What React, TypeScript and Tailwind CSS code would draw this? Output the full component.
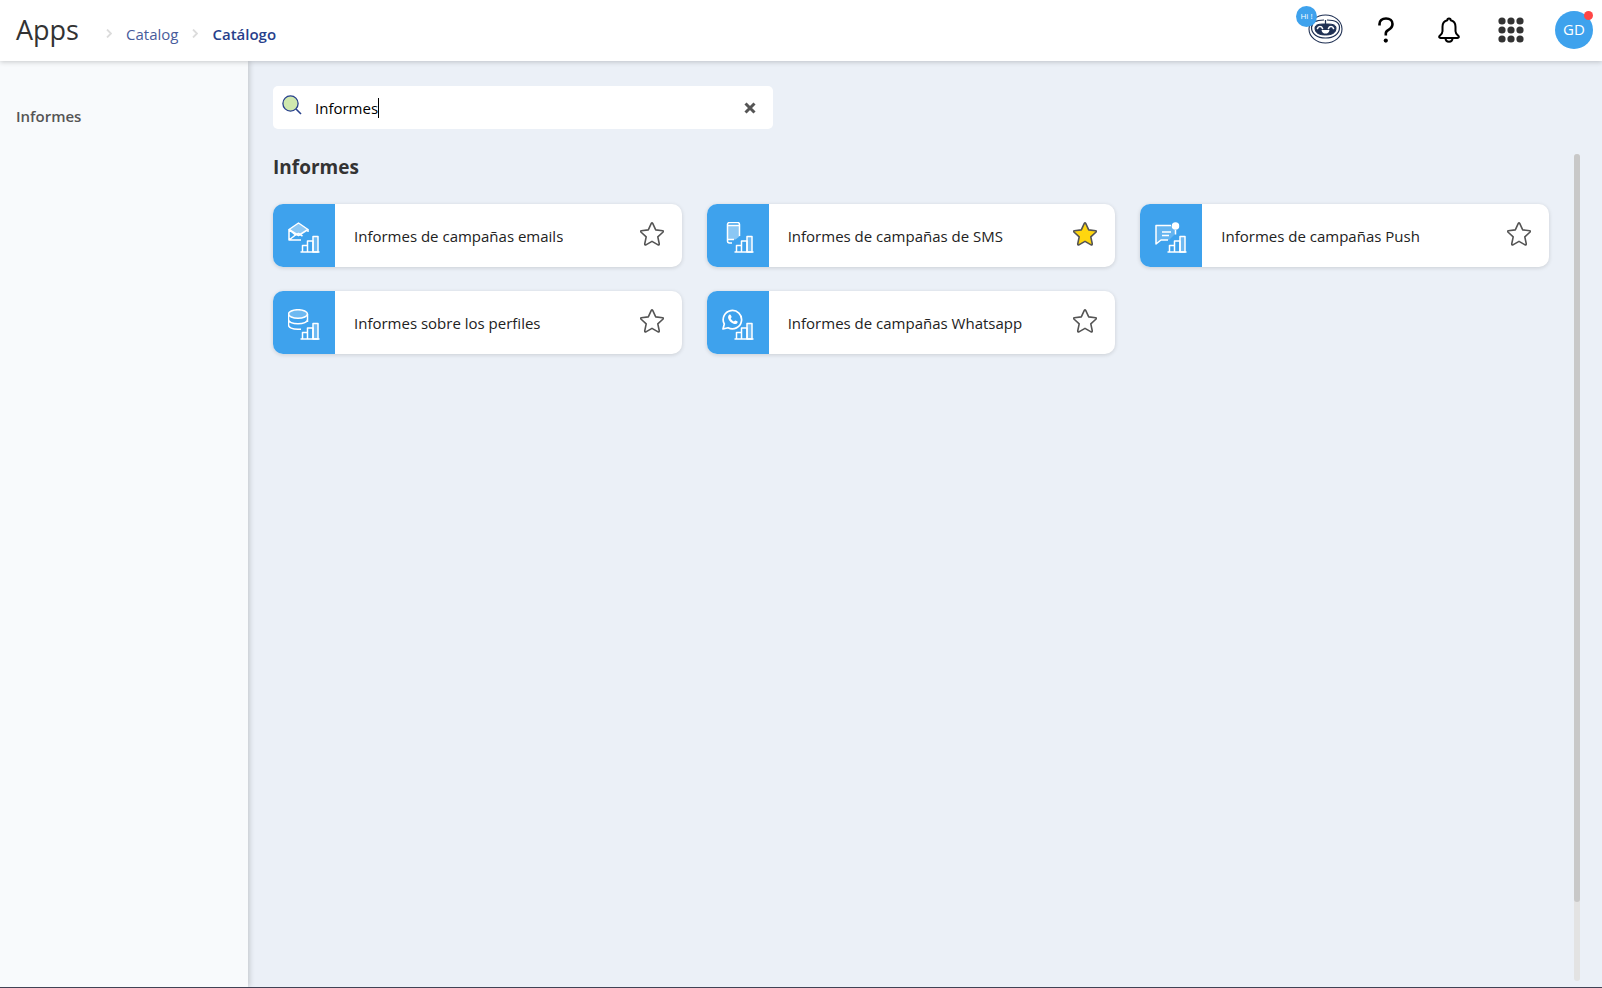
import { useState, type ReactNode } from "react";

type AppIcon = "email" | "sms" | "push" | "profiles" | "whatsapp";

type AppItem = {
  name: string;
  icon: AppIcon;
  favorite: boolean;
};

const APPS: AppItem[] = [
  { name: "Informes de campañas emails", icon: "email", favorite: false },
  { name: "Informes de campañas de SMS", icon: "sms", favorite: true },
  { name: "Informes de campañas Push", icon: "push", favorite: false },
  { name: "Informes sobre los perfiles", icon: "profiles", favorite: false },
  { name: "Informes de campañas Whatsapp", icon: "whatsapp", favorite: false },
];

// Every report icon is a channel symbol with the same bar chart in the corner
const SYMBOLS: Record<AppIcon, ReactNode> = {
  email: (
    <>
      <path d="M1 7.5 10.5 1 20 7.5l-9.500 6z" fill="#fff" fillOpacity=".4" />
      <path d="M1 7.500V18h12M1 7.500l6.500 5.500L1 18M7.500 13l3-1.500 4 2.500M20 7.500V10" />
    </>
  ),
  sms: (
    <>
      <path d="M5.500 3.500h12v11l-4 3h-8z" fill="#fff" fillOpacity=".4" stroke="none" />
      <path d="M17.500 14V2.500a2 2 0 0 0-2-2h-8a2 2 0 0 0-2 2V19a2 2 0 0 0 2 2H10M5.500 3.500h12M5.500 17.500H12" />
    </>
  ),
  push: (
    <>
      <path d="M1 3.500h19V12l-6 6H6l-5 4z" fill="#fff" fillOpacity=".2" stroke="none" />
      <path d="M16 3.500H1V22l5-4h7M20.500 8v4.500M7 10h9M7 13.500h7" />
      <circle cx="20.500" cy="4" r="3" fill="#fff" />
    </>
  ),
  profiles: (
    <>
      <ellipse cx="10" cy="5" rx="9.500" ry="4.300" fill="#fff" fillOpacity=".25" />
      <path d="M.5 5v11c0 2.500 4 4.300 9.500 4.300h3M19.500 5v8M.5 10.500c0 2.500 4 4.300 9.500 4.300s9.500-1.800 9.500-4.300" />
    </>
  ),
  whatsapp: (
    <>
      <path d="M1 20l1.300-5A9.200 9.200 0 1 1 6 18.700z" strokeWidth="1.700" />
      <path
        d="M7 6c.8-.8 1.600-.6 2 .4l.6 1.400c.2.600-.8 1.300-.8 1.600.6 1.400 1.700 2.400 3.100 3 .4 0 1-1.200 1.500-1l1.900.9c.8.500.2 1.700-.4 2.200-1.400 1.200-3.800.6-5.900-1.200C6.500 11 5 8 7 6z"
        fill="#fff"
        stroke="none"
      />
    </>
  ),
};

function ReportIcon({ icon }: { icon: AppIcon }) {
  return (
    <svg className="size-8" viewBox="0 0 32 32" fill="none" stroke="#fff" strokeWidth="1.500" strokeLinejoin="round" aria-hidden="true">
      {SYMBOLS[icon]}
      <path d="M25 14.500h5V30h-5z" fill="#fff" fillOpacity=".25" />
      <path d="M12.500 30h19M14.500 30v-6.500h5M19.500 30V19H25v11z" />
    </svg>
  );
}

function StarIcon({ filled }: { filled: boolean }) {
  return (
    <svg className="size-6" viewBox="0 0 24 24" fill={filled ? "#ffd60f" : "none"} stroke="#555" strokeWidth="1.600" strokeLinejoin="round" aria-hidden="true">
      <path d="M11.300 1.400q.7-1.200 1.400 0l3 6.500 7 .8q1.200.4.4 1.300l-5.300 4.900 1.500 7.100q0 1.200-1.200.9L12 19.400l-6.100 3.500q-1.200.3-1.200-.9l1.500-7.100L.9 10q-.8-.9.4-1.300l7-.8z" />
    </svg>
  );
}

function RobotIcon() {
  return (
    <svg className="h-[30px] w-[35px]" viewBox="0 0 35 30" fill="none" stroke="#1f3053" aria-hidden="true">
      <ellipse cx="17.500" cy="15" rx="16.500" ry="14" strokeWidth="1.100" />
      <path d="M16 6C8 6 3.500 8 3.500 13.500c0 6.500 6 10.500 14 10.500s14-4 14-10.500C31.500 8 27 6 19 6" strokeWidth="1.200" />
      <path d="M17.500 10c7 0 10.500.5 10.500 4.200 0 5-4.500 6.800-10.500 6.800S7 19.200 7 14.200C7 10.500 10.500 10 17.500 10z" fill="#1f3053" />
      <path d="M17.500 6v4" strokeWidth="1.300" />
      <path d="M9.500 14.500c.8-2.600 4-2.600 5 0M20.500 14.500c1-2.600 4.200-2.600 5 0" stroke="#fff" strokeWidth="1.600" strokeLinecap="round" />
      <path d="M13.500 16h8c-.5 2.600-1.900 3.600-4 3.600s-3.500-1-4-3.600z" fill="#fff" stroke="none" />
    </svg>
  );
}

function Chevron() {
  return (
    <svg className="h-[9px] w-1.5 shrink-0" viewBox="0 0 6 9" fill="none" stroke="#dcdcdc" strokeWidth="1.800" aria-hidden="true">
      <path d="M1 .5l4 4-4 4" />
    </svg>
  );
}

function Header() {
  return (
    <header className="relative z-20 flex h-[61px] shrink-0 items-center justify-between bg-white pr-[9px] pb-0.5 pl-4 shadow-[0_1px_5px_rgba(0,0,0,0.2)]">
      <div className="flex items-center">
        <h1 className="w-[90px] text-[27px] leading-[59px] font-medium text-[#333]">Apps</h1>
        <nav aria-label="Breadcrumb" className="flex items-center gap-3.5 pt-2 text-[15px] leading-6 text-[#27408b]">
          <Chevron />
          <a href="#catalog" className="opacity-85">Catalog</a>
          <Chevron />
          <a href="#catalogo" aria-current="page" className="font-semibold">Catálogo</a>
        </nav>
      </div>

      <div className="flex items-center">
        <button type="button" aria-label="Assistant" className="relative mr-[35px] mb-0.5">
          <RobotIcon />
          <span className="absolute -top-2 -left-3 grid size-[21px] place-items-center rounded-full bg-[#3ea2ed] text-[8px] text-white">
            Hi !
          </span>
        </button>
        <button type="button" aria-label="Help" className="mr-11">
          <svg className="h-[26px] w-4" viewBox="0 0 16 26" fill="none" stroke="#000" strokeWidth="2.600" aria-hidden="true">
            <path d="M1.500 8.500V7c0-3.500 2.500-5.500 6.500-5.500s6.500 2 6.500 5.500c0 3-1.500 4.400-4 5.800-2 1.100-2.700 1.900-2.700 3.600v2" />
            <circle cx="7.800" cy="23.600" r="2.100" fill="#000" stroke="none" />
          </svg>
        </button>
        <button type="button" aria-label="Notifications" className="mr-[38px]">
          <svg className="h-[26px] w-[22px]" viewBox="0 0 22 26" fill="none" stroke="#000" strokeWidth="2" strokeLinejoin="round" aria-hidden="true">
            <path d="M9.300 3.300C9.300 2 10 1.500 11 1.500s1.700.5 1.700 1.800c3.300.8 4.800 3.200 4.800 6.500v4.500c0 2 .8 2.700 2.500 4.200 1.500 1.400.8 2.500-.5 2.500h-17c-1.300 0-2-1.100-.5-2.500 1.700-1.500 2.500-2.200 2.500-4.200V9.800c0-3.300 1.500-5.700 4.800-6.500z" />
            <path d="M7.500 21c0 2.500 1.500 3.700 3.500 3.700s3.500-1.200 3.500-3.700" />
          </svg>
        </button>
        <button type="button" aria-label="Apps menu" className="mr-[31px]">
          <svg className="size-[26px]" viewBox="0 0 26 26" fill="#333" aria-hidden="true">
            {[4, 13, 22].map((cy) =>
              [4, 13, 22].map((cx) => <circle key={`${cx}-${cy}`} cx={cx} cy={cy} r="3.600" />)
            )}
          </svg>
        </button>
        <button type="button" className="relative grid size-[38px] place-items-center rounded-full bg-[#3ea2ed] text-[15px] text-white">
          GD
          <span className="absolute top-0 right-0 size-[9px] rounded-full bg-[#ff4545]" />
        </button>
      </div>
    </header>
  );
}

function SearchBox({ value, onChange }: { value: string; onChange: (value: string) => void }) {
  return (
    <div className="flex h-[43px] w-full max-w-[500px] shrink-0 items-center rounded-[5px] bg-white pr-4 pl-[9px]">
      <svg className="mr-[13px] mb-1.5 size-5 shrink-0" viewBox="0 0 20 20" fill="none" stroke="#27408b" strokeWidth="1.300" aria-hidden="true">
        <circle cx="8.500" cy="8.500" r="7.600" fill="#cfe8ae" />
        <path d="M14 14l5 5" strokeWidth="1.600" />
      </svg>
      <div className="flex flex-1 items-center">
        <input
          type="text"
          aria-label="Buscar"
          value={value}
          onChange={(e) => onChange(e.target.value)}
          className="h-6 [field-sizing:content] text-[15px] leading-6 text-black caret-transparent outline-none"
        />
        <span className="h-5 w-px bg-black" />
      </div>
      <button type="button" aria-label="Borrar" onClick={() => onChange("")}>
        <svg className="size-3.5" viewBox="0 0 14 14" stroke="#555" strokeWidth="3" aria-hidden="true">
          <path d="M2.500 2.500l9 9M11.500 2.500l-9 9" />
        </svg>
      </button>
    </div>
  );
}

function AppCard({ item, onToggle }: { item: AppItem; onToggle: () => void }) {
  return (
    <li className="flex h-[63px] items-stretch overflow-hidden rounded-[10px] bg-white shadow-[0_1px_4px_rgba(0,0,0,0.14)]">
      <a href="#app" className="flex min-w-0 flex-1 items-center">
        <span className="grid h-full w-[62px] shrink-0 place-items-center bg-[#3ea2ed] pt-1">
          <ReportIcon icon={item.icon} />
        </span>
        <span className="truncate pl-[19px] text-[15px] leading-6 text-[#222]">{item.name}</span>
      </a>
      <button type="button" aria-label="Favorito" aria-pressed={item.favorite} onClick={onToggle} className="pr-[18px] pb-1 pl-3">
        <StarIcon filled={item.favorite} />
      </button>
    </li>
  );
}

export default function App() {
  const [query, setQuery] = useState("Informes");
  const [apps, setApps] = useState(APPS);

  const visible = apps.filter((app) => app.name.toLowerCase().includes(query.toLowerCase()));

  const toggle = (name: string) =>
    setApps(apps.map((app) => (app.name === name ? { ...app, favorite: !app.favorite } : app)));

  return (
    <div className="flex h-screen flex-col overflow-hidden border-b border-[#414355] bg-[#ebf0f7] font-['Open_Sans',sans-serif]">
      <Header />
      <div className="flex min-h-0 flex-1">
        <aside className="relative z-10 w-[248px] shrink-0 bg-[#f8fafc] px-4 pt-[43px] shadow-[1px_0_6px_rgba(0,0,0,0.2)]">
          <a href="#informes" className="text-[15px] leading-6 font-semibold text-[#555]">Informes</a>
        </aside>

        <main className="flex min-w-0 flex-1 flex-col pt-[25px] pb-1.5 pl-[25px]">
          <SearchBox value={query} onChange={setQuery} />
          <div className="mt-[25px] flex min-h-0 flex-1 pr-[22px]">
            <section className="min-w-0 flex-1 pr-[25px]">
              <h2 className="text-[19px] leading-[26px] font-bold text-[#333]">Informes</h2>
              <ul className="mt-6 grid grid-cols-3 gap-x-[25px] gap-y-6">
                {visible.map((app) => (
                  <AppCard key={app.name} item={app} onToggle={() => toggle(app.name)} />
                ))}
              </ul>
            </section>
            {/* Scroll rail */}
            <div className="w-1.5 rounded-full bg-[#e3e3e3]">
              <div className="h-19/21 rounded-full bg-[#c8c8c8]" />
            </div>
          </div>
        </main>
      </div>
    </div>
  );
}
